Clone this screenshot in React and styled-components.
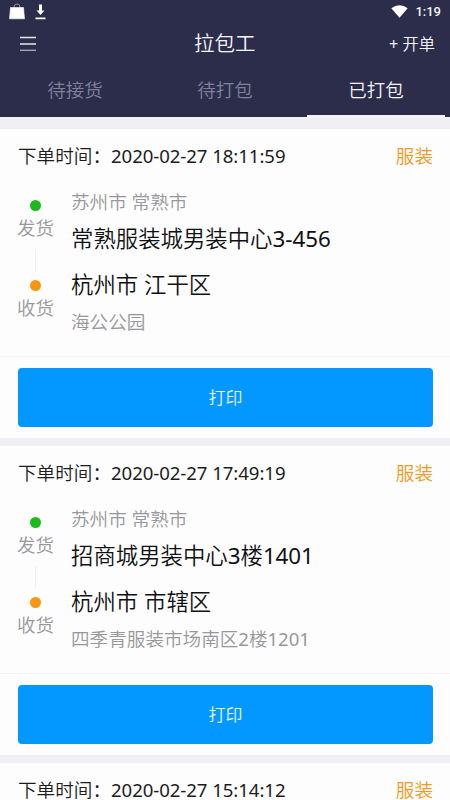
import React from "react"
import styled, { createGlobalStyle } from "styled-components"

const GlobalStyle = createGlobalStyle`
  * {
    box-sizing: border-box;
  }
  body {
    margin: 0;
    background: #f0f0f4;
    font-family: "Noto Sans", "Noto Sans CJK SC", sans-serif;
    font-weight: 350;
  }
`

const Wrapper = styled.div`
  width: 450px;
  height: 800px;
  overflow: hidden;
  display: flex;
  flex-direction: column;
`

const Header = styled.header`
  flex: none;
  height: 117px;
  background: #2b2d4b;
  color: #f4f4fc;
`

const StatusBar = styled.div`
  height: 23px;
  padding: 0 9px;
  display: flex;
  align-items: center;
  justify-content: space-between;
`

const StatusGroup = styled.div`
  display: flex;
  align-items: center;
  gap: ${props => props.$gap}px;
`

const Clock = styled.span`
  font: 500 13px/23px Roboto, sans-serif;
`

const NavBar = styled.div`
  height: 39px;
  padding: 0 15px 0 19px;
  display: grid;
  grid-template-columns: 175px auto 1fr;
  align-items: center;
`

const Title = styled.h1`
  margin: 0;
  font-size: 20.5px;
  line-height: 41px;
  font-weight: 350;
`

const NewOrder = styled.span`
  justify-self: end;
  padding-top: 2px;
  font-size: 16.3px;
  line-height: 39px;
`

const Tabs = styled.nav`
  height: 55px;
  display: grid;
  grid-template-columns: repeat(3, 1fr);
`

const Tab = styled.div`
  display: flex;
  justify-content: center;
  margin: 0 ${props => (props.$active ? "5px 0 7px" : "6px")};
  height: 55px;
  position: relative;
  font-size: 18.5px;
  line-height: 55px;
  color: ${props => (props.$active ? "#f4f4fc" : "#80829c")};

  &::after {
    content: "";
    display: ${props => (props.$active ? "block" : "none")};
    position: absolute;
    left: 0;
    right: 0;
    top: 53px;
    height: 3px;
    background: #f6f2fc;
  }
`

const List = styled.main`
  padding-top: 12px;
`

const Card = styled.section`
  height: 309px;
  margin-bottom: 8px;
  background: #fdfdfe;
`

const CardHead = styled.div`
  height: 56px;
  padding: 0 17px 0 18px;
  display: flex;
  justify-content: space-between;
  font-size: 18.6px;
  line-height: 54px;
  color: #1c1c20;
`

const Kind = styled.span`
  color: #f19a20;
`

const Route = styled.div`
  height: 172px;
  display: grid;
  grid-template-columns: 71px 1fr;
  border-bottom: 1px solid #f5f4f8;
`

const Stops = styled.div`
  display: flex;
  flex-direction: column;
  align-items: center;
  padding: 15px 0 0;
`

const Dot = styled.i`
  flex: none;
  width: 11px;
  height: 11px;
  border-radius: 50%;
  background: ${props => props.$color};
`

const StopName = styled.span`
  height: 34px;
  font-size: 18.5px;
  line-height: 33px;
  color: #98989b;
`

const Line = styled.i`
  width: 1px;
  height: 23px;
  margin: 4px 0 8px;
  background: #f0f0f4;
`

const Places = styled.div`
  display: flex;
  flex-direction: column;
  white-space: nowrap;
`

const Small = styled.span`
  height: ${props => props.$height}px;
  font-size: 18.6px;
  line-height: ${props => props.$height}px;
  color: #98989b;
`

const Big = styled.span`
  height: ${props => props.$height}px;
  font-size: 22.4px;
  line-height: ${props => props.$height}px;
  color: #111114;
`

const Digits = styled.span`
  font-weight: 400;
  letter-spacing: -0.06px;
`

const Print = styled.button`
  display: block;
  width: 415px;
  height: 59px;
  margin: 11px 0 0 18px;
  padding: 0;
  border: 0;
  border-radius: 4px;
  background: #0398ff;
  color: #e8f6ff;
  font-family: inherit;
  font-weight: inherit;
  font-size: 17px;
  line-height: 59px;
`

const orders = [
  {
    time: "2020-02-27 18:11:59",
    fromCity: "苏州市 常熟市",
    from: "常熟服装城男装中心3-456",
    toCity: "杭州市 江干区",
    to: "海公公园",
  },
  {
    time: "2020-02-27 17:49:19",
    fromCity: "苏州市 常熟市",
    from: "招商城男装中心3楼1401",
    toCity: "杭州市 市辖区",
    to: "四季青服装市场南区2楼1201",
  },
  { time: "2020-02-27 15:14:12" },
]

// latin digits have no demi-light cut, so they are set in regular
const withDigits = text =>
  text
    .split(/(\d[\d: -]*)/)
    .map((part, i) => (i % 2 ? <Digits key={i}>{part}</Digits> : part))

const BagIcon = () => (
  <svg width="16" height="17" viewBox="0 0 16 17">
    <path d="M5 5V4a3 3 0 0 1 6 0v1" fill="none" stroke="#8a8ba0" />
    <path
      d="M1.500 4.500h13l1 11.300H.500z"
      fill="#fff"
      stroke="#fff"
      strokeWidth=".6"
      strokeLinejoin="round"
    />
  </svg>
)

const DownloadIcon = () => (
  <svg width="11" height="16" viewBox="0 0 11 16">
    <path d="M4 .600h3v6h2.500L5.500 10.900 1.500 6.600H4zM.500 13.400h10v1.800H.500z" fill="#fff" />
  </svg>
)

const WifiIcon = () => (
  <svg width="17" height="13" viewBox="0 0 17 13">
    <path d="M.3 3.200Q8.500-2.600 16.700 3.200L8.500 12.800z" fill="#fff" />
  </svg>
)

const MenuIcon = () => (
  <svg width="18" height="16" viewBox="0 0 18 16">
    <path d="M1 1.500h16M1 8h16" stroke="#e6e6f2" strokeWidth="1.300" />
    <path d="M1 14.300h16" stroke="#a9aabd" strokeWidth="1.300" />
  </svg>
)

const Order = ({ order }) => (
  <Card>
    <CardHead>
      <span>下单时间：{withDigits(order.time)}</span>
      <Kind>服装</Kind>
    </CardHead>
    {order.from && (
      <>
        <Route>
          <Stops>
            <Dot $color="#1cbb1c" />
            <StopName>发货</StopName>
            <Line />
            <Dot $color="#f8960f" />
            <StopName>收货</StopName>
          </Stops>
          <Places>
            <Small $height={33}>{order.fromCity}</Small>
            <Big $height={41}>{withDigits(order.from)}</Big>
            <Big $height={51}>{order.toCity}</Big>
            <Small $height={23}>{withDigits(order.to)}</Small>
          </Places>
        </Route>
        <Print>打印</Print>
      </>
    )}
  </Card>
)

const App = () => (
  <Wrapper>
    <GlobalStyle />
    <Header>
      <StatusBar>
        <StatusGroup $gap={10}>
          <BagIcon />
          <DownloadIcon />
        </StatusGroup>
        <StatusGroup $gap={7}>
          <WifiIcon />
          <Clock>1:19</Clock>
        </StatusGroup>
      </StatusBar>
      <NavBar>
        <MenuIcon />
        <Title>拉包工</Title>
        <NewOrder>
          <Digits>+</Digits> 开单
        </NewOrder>
      </NavBar>
      <Tabs>
        <Tab>待接货</Tab>
        <Tab>待打包</Tab>
        <Tab $active>已打包</Tab>
      </Tabs>
    </Header>
    <List>
      {orders.map(order => (
        <Order key={order.time} order={order} />
      ))}
    </List>
  </Wrapper>
)

export default App
